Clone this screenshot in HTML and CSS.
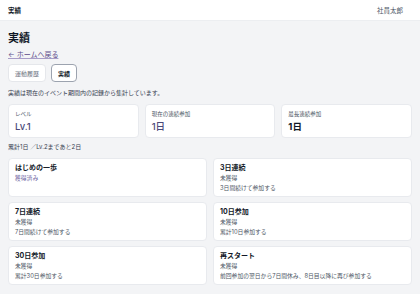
FILE: index.html
```html
<!DOCTYPE html>
<html lang="ja">
<head>
  <meta charset="UTF-8">
  <title>実績</title>
  <link rel="stylesheet" href="styles.css">
</head>
<body>
  <header class="topbar">
    <div class="brand">実績</div>
    <div class="user">社員太郎</div>
  </header>

  <main class="page">
    <h1>実績</h1>
    <a class="back" href="#">← ホームへ戻る</a>

    <div class="tabs">
      <button class="tab">運動履歴</button>
      <button class="tab active">実績</button>
    </div>

    <p class="note">実績は現在のイベント期間内の記録から集計しています。</p>

    <div class="stats">
      <div class="card stat">
        <div class="label">レベル</div>
        <div class="value">Lv.1</div>
      </div>
      <div class="card stat">
        <div class="label">現在の連続参加</div>
        <div class="value">1日</div>
      </div>
      <div class="card stat">
        <div class="label">最長連続参加</div>
        <div class="value strong">1日</div>
      </div>
    </div>

    <p class="progress">累計1日 ／Lv.2まであと2日</p>

    <div class="badges">
      <div class="card badge">
        <div class="title">はじめの一歩</div>
        <div class="status got">獲得済み</div>
      </div>
      <div class="card badge">
        <div class="title">3日連続</div>
        <div class="status">未獲得</div>
        <div class="desc">3日間続けて参加する</div>
      </div>
      <div class="card badge">
        <div class="title">7日連続</div>
        <div class="status">未獲得</div>
        <div class="desc">7日間続けて参加する</div>
      </div>
      <div class="card badge">
        <div class="title">10日参加</div>
        <div class="status">未獲得</div>
        <div class="desc">累計10日参加する</div>
      </div>
      <div class="card badge">
        <div class="title">30日参加</div>
        <div class="status">未獲得</div>
        <div class="desc">累計30日参加する</div>
      </div>
      <div class="card badge">
        <div class="title">再スタート</div>
        <div class="status">未獲得</div>
        <div class="desc">前回参加の翌日から7日間休み、8日目以降に再び参加する</div>
      </div>
    </div>
  </main>
</body>
</html>
```

FILE: styles.css
```css
body {
  margin: 0;
  background-color: #f3f4f6;
  color: #111827;
  font-family: Inter, "Noto Sans CJK JP", sans-serif;
}
.topbar {
  display: flex;
  justify-content: space-between;
  align-items: center;
  height: 21px;
  padding: 0 17px 0 8px;
  background: #fff;
  border-bottom: 1px solid #eceef1;
  box-sizing: border-box;
  font-size: 6.5px;
}
.brand {
  font-weight: 700;
}
.user {
  color: #4b5563;
}
.page {
  padding: 10px 8px;
}
h1 {
  margin: 0;
  font-size: 11px;
  line-height: 14px;
  font-weight: 700;
}
.back {
  display: block;
  width: fit-content;
  margin-top: 5px;
  font-size: 7px;
  line-height: 10px;
  color: #5b4b8a;
  text-decoration-color: #a79cc8;
}
.tabs {
  display: flex;
  gap: 5px;
  margin-top: 4px;
}
.tab {
  height: 18px;
  padding: 0 6px;
  background: #fff;
  border: 1px solid #e5e7eb;
  border-radius: 4px;
  font-family: inherit;
  font-size: 6px;
  color: #6b7280;
}
.tab.active {
  border-color: #9ca3af;
  color: #111827;
  font-weight: 700;
}
.note, .progress {
  margin: 0;
  font-size: 6px;
  line-height: 9px;
  color: #374151;
}
.note {
  margin-top: 5.5px;
}
.card {
  background: #fff;
  border: 1px solid #e8eaee;
  border-radius: 4px;
  box-sizing: border-box;
}
.stats {
  display: grid;
  grid-template-columns: repeat(3, 1fr);
  gap: 6px;
  margin-top: 7.5px;
}
.stat {
  padding: 5px 6px 4px;
}
.label {
  font-size: 5.5px;
  line-height: 8px;
  color: #4b5563;
}
.value {
  margin-top: 2px;
  font-size: 9.5px;
  line-height: 13px;
  font-weight: 500;
  color: #4a4878;
}
.value.strong {
  color: #111827;
  font-weight: 700;
}
.progress {
  margin-top: 3.5px;
}
.badges {
  display: grid;
  grid-template-columns: 1fr 1fr;
  gap: 5px 6px;
  margin-top: 7.5px;
}
.badge {
  padding: 4px 6px 3px;
  min-height: 39px;
}
.title {
  font-size: 7px;
  line-height: 10px;
  font-weight: 700;
}
.status, .desc {
  font-size: 5.8px;
  line-height: 10px;
  color: #4b5563;
}
.status.got {
  color: #6d5fa0;
}
```
